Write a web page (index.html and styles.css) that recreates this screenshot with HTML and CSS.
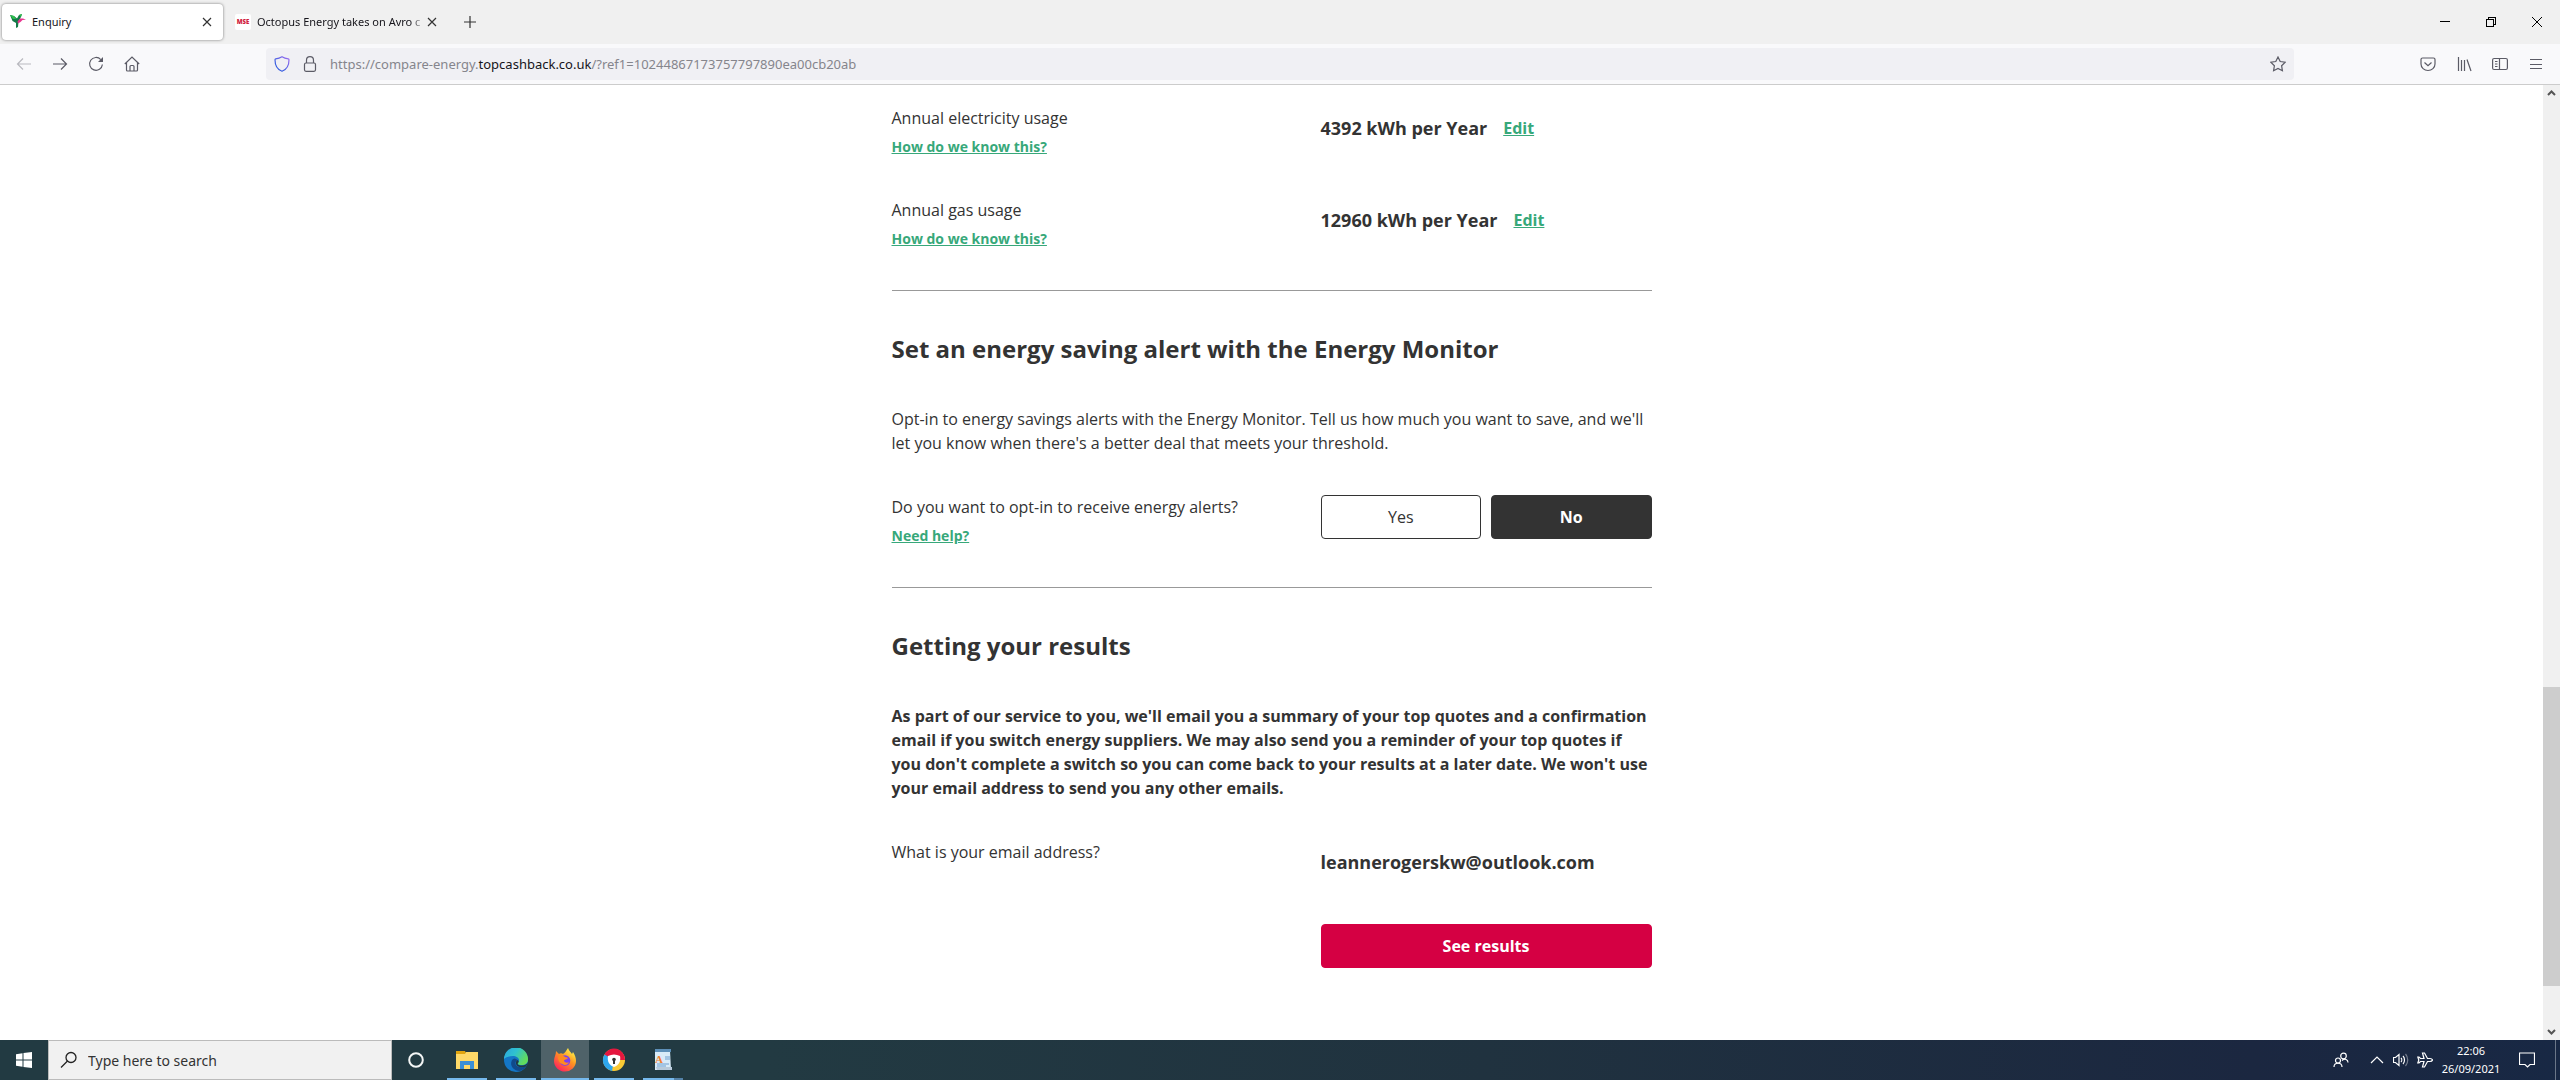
FILE: index.html
```html
<!DOCTYPE html>
<html lang="en">
<head>
    <meta charset="UTF-8">
    <meta name="viewport" content="width=device-width, initial-scale=1.0">
    <title>Enquiry</title>
    <link rel="stylesheet" href="styles.css">
</head>
<body>
    <header class="browser">
        <div class="tab-bar">
            <div class="tab active">
                <svg class="favicon" viewBox="0 0 16 16">
                    <path d="M0 1l4 1 3 2.500L9 1l3-1-1.500 4L8.500 8l-.5 5-2 1V9L2.500 7z" fill="#127a48"/>
                    <path d="M0 1l4 1 2 3-3 0zM9 1l3-1-1 3z" fill="#2fbf4a"/>
                    <path d="M7.500 7.500L10 4.500h3l3 1.200-3.500.3-2 2-2.500 1.500z" fill="#e8368f"/>
                </svg>
                <span class="tab-title">Enquiry</span>
                <button class="tab-close" aria-label="Close tab">
                    <svg width="10" height="10" viewBox="0 0 10 10"><path d="M1 1l8 8M9 1L1 9"/></svg>
                </button>
            </div>
            <div class="tab">
                <span class="favicon mse">MSE</span>
                <span class="tab-title fade">Octopus Energy takes on Avro c</span>
                <button class="tab-close" aria-label="Close tab">
                    <svg width="10" height="10" viewBox="0 0 10 10"><path d="M1 1l8 8M9 1L1 9"/></svg>
                </button>
            </div>
            <button class="new-tab" aria-label="New tab">
                <svg width="12" height="12" viewBox="0 0 12 12"><path d="M6 0v12M0 6h12"/></svg>
            </button>
            <div class="window-controls">
                <button aria-label="Minimise">
                    <svg width="10" height="10" viewBox="0 0 10 10" shape-rendering="crispEdges"><path d="M0 4.5h10"/></svg>
                </button>
                <button aria-label="Restore">
                    <svg width="10" height="10" viewBox="0 0 10 10" shape-rendering="crispEdges"><path d="M.5 2.5h7v7h-7zM2.500 2.500V.5h7v7h-2"/></svg>
                </button>
                <button aria-label="Close">
                    <svg width="10" height="10" viewBox="0 0 10 10"><path d="M0 0l10 10M10 0L0 10"/></svg>
                </button>
            </div>
        </div>

        <nav class="toolbar">
            <button class="tool disabled" aria-label="Back">
                <svg viewBox="0 0 16 16"><path d="M15 8H1.500M7 2.500L1.500 8 7 13.500"/></svg>
            </button>
            <button class="tool" aria-label="Forward">
                <svg viewBox="0 0 16 16"><path d="M1 8h13.500M9 2.500L14.500 8 9 13.500"/></svg>
            </button>
            <button class="tool" aria-label="Reload">
                <svg viewBox="0 0 16 16"><path d="M12.800 3.600A6.400 6.400 0 1 0 14.400 8.500"/><path d="M15 1v5h-5z" fill="#5b5b66" stroke="none"/></svg>
            </button>
            <button class="tool" aria-label="Home">
                <svg viewBox="0 0 16 16"><path d="M.8 8L8 1l7.200 7M2.500 6.500V14a1 1 0 0 0 1 1h9a1 1 0 0 0 1-1V6.500M6 15v-4.500a1 1 0 0 1 1-1h2a1 1 0 0 1 1 1V15"/></svg>
            </button>
            <div class="spacer"></div>
            <div class="url-bar">
                <svg class="shield" viewBox="0 0 16 16">
                    <defs>
                        <linearGradient id="shield-fill" x1="0" y1="1" x2="1" y2="0">
                            <stop offset="0.300" stop-color="#3a5fe0"/>
                            <stop offset="1" stop-color="#a06cf0"/>
                        </linearGradient>
                    </defs>
                    <path d="M8 .8C6 2 4 2.600 1.700 2.900 1.200 3 1 3.300 1 3.800c0 5.200 2 9.700 7 11.500 5-1.800 7-6.300 7-11.500 0-.5-.2-.8-.7-.9C12 2.600 10 2 8 .8z" stroke="url(#shield-fill)"/>
                </svg>
                <svg class="lock" viewBox="0 0 16 16"><rect x="2.500" y="7" width="11" height="8.300" rx="1.500"/><path d="M4.500 7V4.200a3.500 3.500 0 0 1 7 0V7"/></svg>
                <div class="url" contenteditable="true" role="textbox" aria-label="Address">https://compare-energy.<b>topcashback.co.uk</b>/?ref1=10244867173757797890ea00cb20ab</div>
                <svg viewBox="0 0 16 16"><path d="M8 1l2.200 4.500 5 .7-3.600 3.500.8 5L8 12.400l-4.400 2.300.8-5L.8 6.200l5-.7z"/></svg>
            </div>
            <div class="spacer"></div>
            <button class="tool" aria-label="Pocket">
                <svg viewBox="0 0 16 16"><path d="M2.500 2h11a1.500 1.500 0 0 1 1.500 1.500V8A7 6.500 0 0 1 1 8V3.500A1.500 1.500 0 0 1 2.500 2zM4.500 6.500L8 9.800l3.500-3.300"/></svg>
            </button>
            <button class="tool" aria-label="Library">
                <svg viewBox="0 0 16 16"><path d="M2.500 1v14M5.500 4v11M8.500 4v11M11 3.500l4 11.500"/></svg>
            </button>
            <button class="tool" aria-label="Sidebars">
                <svg viewBox="0 0 16 16"><rect x=".6" y="2.500" width="14.800" height="11" rx="1.500"/><path d="M7.500 2.500v11M3 5.500h2.500M3 8h2.500M3 10.500h2.500"/></svg>
            </button>
            <button class="tool" aria-label="Menu">
                <svg viewBox="0 0 16 16" shape-rendering="crispEdges"><path d="M2 3.500h12M2 8.500h12M2 12.500h12"/></svg>
            </button>
        </nav>
    </header>

    <div class="viewport">
        <main class="page">
            <form class="enquiry">
                <section class="section">
                    <div class="row">
                        <div class="question">
                            <p>Annual electricity usage</p>
                            <a class="help" href="#">How do we know this?</a>
                        </div>
                        <div class="answer">
                            <span class="value">4392 kWh per Year</span>
                            <a class="edit" href="#">Edit</a>
                        </div>
                    </div>
                    <div class="row">
                        <div class="question">
                            <p>Annual gas usage</p>
                            <a class="help" href="#">How do we know this?</a>
                        </div>
                        <div class="answer">
                            <span class="value">12960 kWh per Year</span>
                            <a class="edit" href="#">Edit</a>
                        </div>
                    </div>
                </section>

                <section class="section">
                    <h2>Set an energy saving alert with the Energy Monitor</h2>
                    <p>Opt-in to energy savings alerts with the Energy Monitor. Tell us how much you want to save, and we'll let you know when there's a better deal that meets your threshold.</p>
                    <div class="row">
                        <div class="question">
                            <p>Do you want to opt-in to receive energy alerts?</p>
                            <a class="help" href="#">Need help?</a>
                        </div>
                        <div class="answer choices">
                            <button type="button" class="btn">Yes</button>
                            <button type="button" class="btn selected">No</button>
                        </div>
                    </div>
                </section>

                <section class="section">
                    <h2>Getting your results</h2>
                    <p class="strong">As part of our service to you, we'll email you a summary of your top quotes and a confirmation email if you switch energy suppliers. We may also send you a reminder of your top quotes if you don't complete a switch so you can come back to your results at a later date. We won't use your email address to send you any other emails.</p>
                    <div class="row">
                        <div class="question">
                            <p>What is your email address?</p>
                        </div>
                        <div class="answer">
                            <span class="value">leannerogerskw@outlook.com</span>
                        </div>
                    </div>
                    <div class="row">
                        <div class="answer submit">
                            <button type="submit" class="btn primary">See results</button>
                        </div>
                    </div>
                </section>
            </form>
        </main>
        <div class="scrollbar">
            <svg class="arrow" viewBox="0 0 17 17"><path d="M5 10l3.500-3.500L12 10"/></svg>
            <div class="track-before"></div>
            <div class="thumb"></div>
            <div class="track-after"></div>
            <svg class="arrow" viewBox="0 0 17 17"><path d="M5 7l3.500 3.500L12 7"/></svg>
        </div>
    </div>

    <footer class="taskbar">
        <button class="start" aria-label="Start">
            <svg width="16" height="16" viewBox="0 0 16 16"><path d="M0 2.200L6.500 1.300V7.500H0zM7.500 1.100L16 0v7.500H7.500zM0 8.500h6.500v6.200L0 13.800zM7.500 8.500H16V16l-8.500-1.100z" fill="#fff"/></svg>
        </button>
        <label class="search">
            <svg width="18" height="18" viewBox="0 0 18 18"><circle cx="11" cy="6.500" r="5"/><path d="M7.500 10L1 16.500"/></svg>
            <input type="text" placeholder="Type here to search" aria-label="Search">
        </label>
        <button class="cortana" aria-label="Cortana">
            <svg width="18" height="18" viewBox="0 0 18 18"><circle cx="9" cy="9" r="6.800" fill="none" stroke="#f4f6f6" stroke-width="2"/></svg>
        </button>
        <div class="apps">
            <button class="app" aria-label="File Explorer">
                <svg viewBox="0 0 24 24">
                    <path d="M1 3h9l1 2h12v16H1z" fill="#e2a50f"/>
                    <path d="M1 6h9l1-2h12v17H1z" fill="#ffd968"/>
                    <path d="M5 13h14v8h-4v-4H9v4H5z" fill="#3b8fd6"/>
                </svg>
            </button>
            <button class="app" aria-label="Edge">
                <svg viewBox="0 0 24 24">
                    <defs>
                        <linearGradient id="edge-top" x1="0" y1="0" x2="1" y2="0.500">
                            <stop offset="0" stop-color="#2ba3e0"/>
                            <stop offset="0.500" stop-color="#2fc2cf"/>
                            <stop offset="1" stop-color="#62dc5c"/>
                        </linearGradient>
                    </defs>
                    <circle cx="12" cy="12" r="12" fill="#1476c6"/>
                    <path d="M0 11A12 12 0 0 1 24 11.500c0 4-3 5.500-6 5.500-3 0-4.500-1-4-2 3-4-1-7-5-7-4 0-7 1-9 3z" fill="url(#edge-top)"/>
                    <path d="M8 12c-3 6 2 11 8 11 3-1 5-3 6.500-5-4 2-10 2-11-2-.5-2 .5-3 2-4-2-2-4-2-5.500 0z" fill="#114a8b"/>
                    <path d="M14 15c-1 1 0 2.500 4 2.500 2.500 0 5-1 6-3.500-1 3-1 3-2 4.500-4 1.500-9 1-10-2.500-.3-1.500 0-3 1.500-4 1.500 1 1.500 2 .5 3z" fill="#223a42"/>
                </svg>
            </button>
            <button class="app active" aria-label="Firefox">
                <svg viewBox="0 0 24 24">
                    <defs>
                        <linearGradient id="fox" x1="0.900" y1="0" x2="0.200" y2="1">
                            <stop offset="0.100" stop-color="#fff04a"/>
                            <stop offset="0.450" stop-color="#ff9620"/>
                            <stop offset="0.900" stop-color="#ff2f55"/>
                        </linearGradient>
                    </defs>
                    <path d="M1 13C1 9 3 7 3 3l3 3c1-1 3-1 4 0 2-1 3-3 5-6 1 3 3 4 4 6l1-2c2 3 3 6 3 9a11 10.500 0 0 1-22 0z" fill="url(#fox)"/>
                    <circle cx="12" cy="12.500" r="5.300" fill="#7c3ff0"/>
                    <path d="M5 9c2-2 5-2 7 0 2 0 3 1 3 1-1 2-4 1-4 3 1 2 4 2 5 1-1 3-4 4-7 2-3-1-4-4-4-7z" fill="#ff8a20"/>
                </svg>
            </button>
            <button class="app" aria-label="Secure browser">
                <svg viewBox="0 0 24 24">
                    <circle cx="12" cy="12" r="11" fill="#f9c935"/>
                    <path d="M12 12L2 7A11 11 0 0 1 23 12z" fill="#e5173f"/>
                    <path d="M12 12L2.500 6.500A11 11 0 0 0 10 23z" fill="#2ea7ee"/>
                    <path d="M6 8q6-3 12 0c1 5-1 9-6 11-5-2-7-6-6-11z" fill="#fff"/>
                    <circle cx="12" cy="11.500" r="1.800" fill="#333"/>
                    <path d="M11 12h2v4h-2z" fill="#333"/>
                </svg>
            </button>
            <button class="app stacked" aria-label="WordPad">
                <svg viewBox="0 0 24 24">
                    <path d="M4 2h15l1 20H4z" fill="#d9ebf8"/>
                    <path d="M4 1h16v3H4z" fill="#5d8fb8"/>
                    <path d="M5 19h16v3H6z" fill="#b8cadb"/>
                    <path d="M14 9h5M14 11h5M6 16h12M6 18h9" stroke="#6f9fd0"/>
                    <text class="pad-letter" x="4" y="15">A</text>
                </svg>
            </button>
        </div>
        <div class="tray">
            <button class="tray-icon people" aria-label="People">
                <svg width="16" height="16" viewBox="0 0 16 16"><circle cx="10.500" cy="4" r="2.800"/><circle cx="5" cy="8.500" r="2.500"/><path d="M1 15c0-5 8-5 8 0M9 8.500c3-2.500 6-1 6 2"/></svg>
            </button>
            <button class="tray-icon" aria-label="Show hidden icons">
                <svg width="16" height="16" viewBox="0 0 16 16"><path d="M2 11l6-6 6 6"/></svg>
            </button>
            <button class="tray-icon" aria-label="Volume">
                <svg width="16" height="16" viewBox="0 0 16 16"><path d="M.5 5.500h2L6 2.500v11l-3.500-3h-2zM8 6c1 1 1 3 0 4M10 4c2 2 2 6 0 8"/><path d="M12.500 2c3 3.500 3 8.500 0 12" opacity="0.400"/></svg>
            </button>
            <button class="tray-icon" aria-label="Aeroplane mode">
                <svg width="16" height="16" viewBox="0 0 16 16"><path d="M15.500 8Q15 6.500 13 6.500h-2.500L7.500 1h-2L7 6.500H3.500L2 5H.8l1 3-1 3H2l1.500-1.500H7L5.500 15h2l3-5.500H13Q15 9.500 15.500 8z"/></svg>
            </button>
            <div class="clock">
                <time>22:06</time>
                <span>26/09/2021</span>
            </div>
            <button class="notifications" aria-label="Notifications">
                <svg width="16" height="16" viewBox="0 0 16 16"><path d="M.5 1h15v11.500H11l-2.500 2.500L6 12.500H.5z"/></svg>
            </button>
            <div class="show-desktop"></div>
        </div>
    </footer>
</body>
</html>
```
FILE: styles.css
```css
* {
    margin: 0;
    padding: 0;
    box-sizing: border-box;
}

body {
    font-family: 'Open Sans', 'Segoe UI', sans-serif;
    font-size: 16px;
    line-height: 24px;
    color: #333;
    background: white;
    height: 100vh;
    display: flex;
    flex-direction: column;
    overflow: hidden;
}

button {
    font: inherit;
    color: inherit;
    background: none;
    border: none;
}

svg {
    display: block;
    flex: none;
}

/* Browser chrome */
.browser {
    font-family: 'Noto Sans', 'Segoe UI', sans-serif;
    background: #f0f0f0;
    border-bottom: 1px solid #ccc;
    color: #15141a;
    flex: none;
}

.tab-bar {
    display: flex;
    align-items: center;
    height: 44px;
    padding-left: 2px;
}

.tab {
    display: flex;
    align-items: center;
    width: 221px;
    height: 36px;
    margin-right: 4px;
    padding: 0 8px;
    border-radius: 4px;
    font-size: 11px;
    line-height: 16px;
}

.tab.active {
    background: white;
    box-shadow: 0 0 3px rgba(0, 0, 0, 0.5);
}

.favicon {
    width: 16px;
    height: 16px;
    margin-right: 6px;
    flex: none;
}

.mse {
    background: white;
    border-radius: 2px;
    color: #d0203c;
    font-size: 6px;
    font-weight: 900;
    text-align: center;
}

.tab-title {
    flex: 1;
    white-space: nowrap;
}

.tab-title.fade {
    mask-image: linear-gradient(to left, transparent, black 12px);
}

.tab-close {
    display: flex;
    justify-content: center;
    width: 16px;
}

.tab-close svg,
.new-tab svg {
    stroke: #333;
    stroke-width: 1.2;
}

.new-tab {
    display: flex;
    justify-content: center;
    width: 36px;
}

.window-controls {
    display: flex;
    margin-left: auto;
}

.window-controls button {
    display: flex;
    align-items: center;
    justify-content: center;
    width: 46px;
    height: 44px;
}

.window-controls svg {
    fill: none;
    stroke: black;
}

.toolbar {
    display: flex;
    align-items: center;
    height: 40px;
    padding: 0 6px;
    background: #f9f9fb;
}

.toolbar svg {
    width: 16px;
    height: 16px;
    fill: none;
    stroke: #5b5b66;
    stroke-width: 1.2;
}

.tool {
    display: flex;
    justify-content: center;
    width: 36px;
}

.tool.disabled {
    opacity: 0.4;
}

.spacer {
    flex: 9;
}

.url-bar {
    flex: 156;
    display: flex;
    align-items: center;
    gap: 12px;
    height: 32px;
    padding: 0 8px;
    background: #f0f0f4;
    border-radius: 4px;
}

.url {
    flex: 1;
    font-size: 13px;
    line-height: 20px;
    color: #85858c;
}

.url b {
    font-weight: normal;
    color: #15141a;
}

/* Page */
.viewport {
    flex: 1;
    min-height: 0;
    display: flex;
}

.page {
    flex: 1;
    overflow: hidden;
    padding-top: 21px;
}

.enquiry {
    max-width: 760px;
    margin: 0 auto;
}

.section {
    display: flex;
    flex-direction: column;
    gap: 40px;
}

.section + .section {
    margin-top: 40px;
    padding-top: 40px;
    border-top: 1px solid #999;
}

h2 {
    font-size: 24px;
    line-height: 36px;
}

.strong {
    font-weight: bold;
}

.row {
    display: flex;
    justify-content: space-between;
}

.help {
    display: inline-block;
    margin-top: 6px;
    font-size: 14px;
    line-height: 22px;
}

a {
    color: #37a87a;
    font-weight: bold;
}

.answer {
    display: flex;
    align-items: center;
    gap: 16px;
    width: 331px;
    height: 44px;
}

.value {
    font-size: 18px;
    font-weight: bold;
}

.choices {
    gap: 10px;
}

.submit {
    margin-left: auto;
}

.btn {
    flex: 1;
    height: 44px;
    border: 1px solid #333;
    border-radius: 4px;
    background: white;
}

.btn.selected {
    background: #333;
    color: white;
    font-weight: bold;
}

.btn.primary {
    background: #d50043;
    border-color: #d50043;
    color: white;
    font-weight: bold;
}

.scrollbar {
    display: flex;
    flex-direction: column;
    width: 17px;
    background: #f0f0f0;
}

.arrow {
    width: 17px;
    height: 17px;
    fill: none;
    stroke: #555;
    stroke-width: 2;
}

.track-before {
    flex: 585;
}

.thumb {
    flex: 299;
    background: #cdcdcd;
}

.track-after {
    flex: 37;
}

/* Taskbar */
.taskbar {
    flex: none;
    display: flex;
    height: 40px;
    background: linear-gradient(90deg, #223a42 30%, #20323f 58%, #1b2740 88%, #182844);
    font-family: 'Noto Sans', 'Segoe UI', sans-serif;
    color: white;
}

.start,
.cortana,
.app {
    display: flex;
    align-items: center;
    justify-content: center;
    width: 48px;
    height: 40px;
}

.search {
    display: flex;
    align-items: center;
    gap: 10px;
    width: 344px;
    padding: 0 11px;
    background: #f1f1f1;
    border: 1px solid #bbb;
}

.search svg {
    fill: none;
    stroke: #222;
    stroke-width: 1.3;
}

.search input {
    flex: 1;
    border: none;
    background: none;
    font: 14px 'Noto Sans', 'Segoe UI', sans-serif;
}

.search input::placeholder {
    color: #333;
}

.apps {
    display: flex;
    gap: 1px;
    margin-left: 3px;
}

.app {
    background: linear-gradient(#76b9ed, #76b9ed) bottom / 40px 2px no-repeat;
}

.app.active {
    background-color: #4f6269;
    background-size: 48px 2px;
}

.app.stacked {
    background: linear-gradient(90deg, #76b9ed 31px, #5482a8 31px) bottom / 40px 2px no-repeat;
}

.app svg {
    width: 24px;
    height: 24px;
}

.pad-letter {
    font: bold 11px 'Liberation Serif', serif;
    fill: #f08030;
}

.tray {
    display: flex;
    align-items: center;
    margin-left: auto;
}

.tray svg {
    fill: none;
    stroke: white;
    stroke-width: 1.2;
}

.tray-icon {
    display: flex;
    justify-content: center;
    width: 24px;
}

.people {
    margin-right: 12px;
}

.clock {
    display: flex;
    flex-direction: column;
    align-items: center;
    width: 68px;
    font-size: 11px;
    line-height: 18px;
}

.notifications {
    display: flex;
    justify-content: center;
    width: 44px;
}

.show-desktop {
    width: 5px;
    height: 40px;
    margin-left: 6px;
    border-left: 1px solid #6b7688;
}
```
